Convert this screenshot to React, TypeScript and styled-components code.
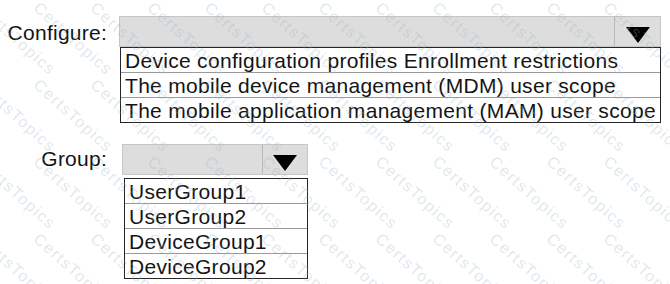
import styled, { createGlobalStyle } from 'styled-components';

const GlobalStyle = createGlobalStyle`
  html, body {
    margin: 0;
    padding: 0;
    background: #ffffff;
  }
  body {
    font-family: "Liberation Sans", Arial, sans-serif;
    color: #141414;
  }
`;

const Page = styled.div`
  position: relative;
  width: 670px;
  height: 284px;
  overflow: hidden;
  padding-top: 16px;
  box-sizing: border-box;
  display: flex;
  flex-direction: column;
  gap: 21px;
`;

const Row = styled.div<{ $gap: number }>`
  display: grid;
  grid-template-columns: 107px auto;
  column-gap: ${(p) => p.$gap}px;
  align-items: start;
`;

const Label = styled.div<{ $lift: number }>`
  height: 31px;
  line-height: ${(p) => 33 - p.$lift * 2}px;
  font-size: 21px;
  letter-spacing: 0.25px;
  text-align: right;
  white-space: nowrap;
`;

const Combo = styled.div<{ $width: number }>`
  width: ${(p) => p.$width}px;
  display: flex;
  flex-direction: column;
`;

const Header = styled.div`
  height: 31px;
  box-sizing: border-box;
  background: #dddddd;
  border: 1px solid #c6c6c6;
  display: flex;
  justify-content: flex-end;
`;

const ArrowButton = styled.div<{ $width: number }>`
  width: ${(p) => p.$width}px;
  border-left: 1px solid #b9b9b9;
  display: flex;
  align-items: flex-end;
  justify-content: center;
  padding-bottom: 3px;
  box-sizing: border-box;
`;

const Triangle = styled.div`
  width: 0;
  height: 0;
  border-left: 12.5px solid transparent;
  border-right: 12.5px solid transparent;
  border-top: 16px solid #000000;
`;

const List = styled.div<{ $inset: number; $top: number }>`
  margin-left: ${(p) => p.$inset}px;
  margin-top: ${(p) => p.$top}px;
  border: 1px solid #262626;
  background: #ffffff;
  display: flex;
  flex-direction: column;
`;

const Option = styled.div`
  height: 24px;
  line-height: 25px;
  font-size: 21px;
  letter-spacing: 0.3px;
  padding-left: 4px;
  white-space: nowrap;
  overflow: hidden;
  & + & {
    border-top: 1px solid #9a9a9a;
  }
`;

const Watermark = styled.div`
  position: absolute;
  inset: 0;
  pointer-events: none;
  display: grid;
  grid-template-columns: repeat(12, 57px);
  grid-auto-rows: 77px;
  justify-items: center;
  align-items: center;
  margin-left: -12px;
`;

const Mark = styled.span`
  font-family: "Liberation Sans", Arial, sans-serif;
  font-size: 16px;
  letter-spacing: 1.5px;
  color: rgba(150, 178, 195, 0.3);
  transform: rotate(42deg);
  white-space: nowrap;
`;

const configureOptions = [
  'Device configuration profiles Enrollment restrictions',
  'The mobile device management (MDM) user scope',
  'The mobile application management (MAM) user scope',
];

const groupOptions = ['UserGroup1', 'UserGroup2', 'DeviceGroup1', 'DeviceGroup2'];

export default function App() {
  return (
    <>
      <GlobalStyle />
      <Page>
        <Row $gap={12}>
          <Label $lift={0}>Configure:</Label>
          <Combo $width={542}>
            <Header>
              <ArrowButton $width={46}>
                <Triangle />
              </ArrowButton>
            </Header>
            <List $inset={1} $top={0}>
              {configureOptions.map((o) => (
                <Option key={o}>{o}</Option>
              ))}
            </List>
          </Combo>
        </Row>
        <Row $gap={15}>
          <Label $lift={2}>Group:</Label>
          <Combo $width={186}>
            <Header>
              <ArrowButton $width={45}>
                <Triangle />
              </ArrowButton>
            </Header>
            <List $inset={2} $top={3}>
              {groupOptions.map((o) => (
                <Option key={o}>{o}</Option>
              ))}
            </List>
          </Combo>
        </Row>
        <Watermark>
          {Array.from({ length: 12 * 4 }).map((_, i) => (
            <Mark key={i}>CertsTopics</Mark>
          ))}
        </Watermark>
      </Page>
    </>
  );
}
